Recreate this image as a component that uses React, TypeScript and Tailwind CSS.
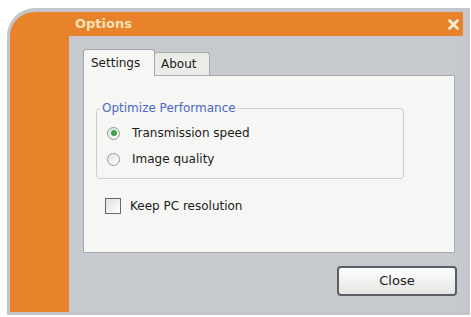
import React from 'react';

const font = { fontFamily: '"DejaVu Sans", Tahoma, sans-serif' };

function Radio({ checked, label }: { checked?: boolean; label: string }) {
  return (
    <label className="flex h-[26px] items-center gap-[12px]">
      <span
        className={
          checked
            ? 'flex h-[13px] w-[13px] items-center justify-center rounded-full border border-[#7fa58a] bg-gradient-to-br from-[#dfe3e6] to-white'
            : 'flex h-[13px] w-[13px] items-center justify-center rounded-full border border-[#8c9aa6] bg-gradient-to-br from-[#dfe3e6] to-white'
        }
      >
        {checked ? <span className="h-[6px] w-[6px] rounded-full bg-[#3fa14a]" /> : null}
      </span>
      <span className="text-[12px] text-[#1b1b1b]">{label}</span>
    </label>
  );
}

export default function App() {
  return (
    <div className="min-h-[317px] w-[471px] bg-white pl-[7px] pt-[8px]" style={font}>
      <div className="flex h-[307px] w-[463px] flex-col overflow-hidden rounded-tl-[28px] border-b-[3px] border-l-[3px] border-r-[7px] border-t-[4px] border-[#c3c7cb] bg-[#e9832b]">
        {/* title bar */}
        <div className="flex h-[24px] shrink-0 items-center justify-between pl-[65px] pr-[4px]">
          <span className="text-[13px] font-bold text-[#f8e2b8]">Options</span>
          <svg width="11" height="11" viewBox="0 0 11 11">
            <path d="M1.5 1.5 L9.5 9.5 M9.5 1.5 L1.5 9.5" stroke="#fbefd9" strokeWidth="2.6" strokeLinecap="round" />
          </svg>
        </div>

        <div className="flex flex-1">
          {/* orange side strip */}
          <div className="w-[59px] shrink-0" />

          {/* grey body */}
          <div className="flex flex-1 flex-col bg-[#c6c9cd] pl-[14px] pr-[8px] pt-[13px]">
            {/* tabs */}
            <div className="flex items-end">
              <div className="relative z-10 -mb-px flex h-[27px] w-[72px] items-center rounded-t-[3px] border border-b-0 border-[#a6a9ad] bg-[#f6f6f4] pl-[7px] text-[12px] text-[#1b1b1b]">
                Settings
              </div>
              <div className="flex h-[23px] w-[55px] items-center rounded-t-[3px] border border-b-0 border-l-0 border-[#a6a9ad] bg-[#ebebe8] pl-[6px] text-[12px] text-[#1b1b1b]">
                About
              </div>
            </div>

            {/* panel */}
            <div className="h-[178px] border border-[#a6a9ad] bg-[#f6f6f4] pl-[12px] pr-[50px] pt-[23px]">
              <fieldset className="h-[80px] rounded-[4px] border border-[#cfd0cc] px-[10px] pb-[6px]">
                <legend className="-ml-[7px] px-[2px] text-[12px] text-[#4a68c6]">Optimize Performance</legend>
                <div className="flex flex-col pt-[3px]">
                  <Radio checked label="Transmission speed" />
                  <Radio label="Image quality" />
                </div>
              </fieldset>

              <label className="mt-[18px] flex items-center gap-[9px] pl-[9px]">
                <span className="h-[16px] w-[16px] border border-[#5d6a78] bg-gradient-to-br from-[#dcdfe2] to-white" />
                <span className="text-[12px] text-[#1b1b1b]">Keep PC resolution</span>
              </label>
            </div>

            {/* footer */}
            <div className="flex justify-end pt-[13px]">
              <button className="-mr-[2px] flex h-[30px] w-[120px] items-center justify-center rounded-[4px] border-2 border-[#5a5f66] bg-gradient-to-b from-white to-[#e4e4e2] text-[13px] text-[#1b1b1b]">
                Close
              </button>
            </div>
          </div>
        </div>
      </div>
    </div>
  );
}
